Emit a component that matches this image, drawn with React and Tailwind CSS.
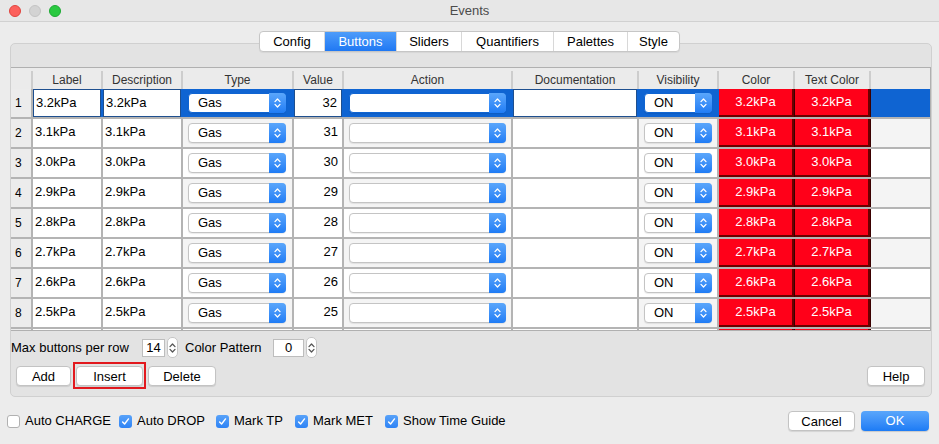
import React from "react";

const cols = [
  "w-[22px]",
  "w-[70px]",
  "w-[80px]",
  "w-[111px]",
  "w-[50px]",
  "w-[169px]",
  "w-[126px]",
  "w-[80px]",
  "w-[76px]",
  "w-[76px]",
  "flex-1",
];

const headers = ["", "Label", "Description", "Type", "Value", "Action", "Documentation", "Visibility", "Color", "Text Color", ""];

const rows = ["3.2", "3.1", "3.0", "2.9", "2.8", "2.7", "2.6", "2.5", "2.4"].map((v, i) => ({
  n: i + 1,
  label: v + "kPa",
  value: 32 - i,
}));

function Chevrons({ color = "white" }) {
  return (
    <svg width="7" height="12" viewBox="0 0 7 12" fill="none" stroke={color} strokeWidth="1.3" strokeLinecap="round" strokeLinejoin="round">
      <path d="M1 4.6 3.5 2 6 4.6" />
      <path d="M1 7.4 3.5 10 6 7.4" />
    </svg>
  );
}

function Popup({ text, width, selected }) {
  return (
    <div
      className={`ml-[5px] flex h-[20px] ${width} items-stretch rounded-[4px] border ${
        selected ? "border-[#0f64d2]" : "border-[#c4c4c4]"
      } bg-white shadow-[0_1px_1px_rgba(0,0,0,0.08)]`}
    >
      <span className="flex-1 pl-[9px] text-[13px] leading-[18px] text-black">{text}</span>
      <span className="-my-px -mr-px flex w-[17px] items-center justify-center rounded-r-[4px] bg-gradient-to-b from-[#5aa6fb] to-[#1f7cf5]">
        <Chevrons />
      </span>
    </div>
  );
}

function TextCell({ text, selected, right }) {
  return (
    <div
      className={`h-full w-full bg-white text-[13px] leading-[26px] text-black ${
        selected ? "border border-[#1e4f8f]" : ""
      } ${right ? "pr-[4px] text-right" : "pl-[2px]"}`}
    >
      {text}
    </div>
  );
}

function RedCell({ text }) {
  return (
    <div className="flex h-full w-full items-center justify-center border-r-2 border-b-2 border-[#6a0000] bg-[#ff0019] text-[13px] text-white">
      {text}
    </div>
  );
}

function Row({ r, hidden }) {
  const sel = r.n === 1;
  const rowBg = sel ? "bg-[#0f64d2]" : r.n % 2 === 0 ? "bg-[#f4f4f4]" : "bg-white";
  const line = sel ? "border-[#0f64d2]" : "border-[#b4b4b4]";
  const t = (s) => (hidden ? "" : s);
  return (
    <div className={`flex h-[30px] shrink-0 border-b-2 border-[#b4b4b4] ${rowBg}`}>
      <div className={`${cols[0]} border-r-2 border-[#b4b4b4] bg-[#ececec] pl-[4px] text-[12px] leading-[28px] text-black`}>{t(r.n)}</div>
      <div className={`${cols[1]} border-r-2 ${line}`}>
        <TextCell text={t(r.label)} selected={sel} />
      </div>
      <div className={`${cols[2]} border-r-2 ${line}`}>
        <TextCell text={t(r.label)} selected={sel} />
      </div>
      <div className={`${cols[3]} flex items-center border-r-2 ${line}`}>
        {!hidden && <Popup text="Gas" width="w-[98px]" selected={sel} />}
      </div>
      <div className={`${cols[4]} border-r-2 ${line}`}>
        <TextCell text={t(r.value)} selected={sel} right />
      </div>
      <div className={`${cols[5]} flex items-center border-r-2 ${line}`}>
        {!hidden && <Popup text="" width="w-[157px]" selected={sel} />}
      </div>
      <div className={`${cols[6]} border-r-2 ${line}`}>
        <TextCell text="" selected={sel} />
      </div>
      <div className={`${cols[7]} flex items-center border-r-2 ${line}`}>
        {!hidden && <Popup text="ON" width="w-[68px]" selected={sel} />}
      </div>
      <div className={`${cols[8]} border-r border-[#3a0000]`}>
        <RedCell text={t(r.label)} />
      </div>
      <div className={`${cols[9]} border-r border-[#3a0000]`}>
        <RedCell text={t(r.label)} />
      </div>
      <div className={cols[10]} />
    </div>
  );
}

function Check({ checked }) {
  return checked ? (
    <span className="flex h-[13px] w-[13px] shrink-0 items-center justify-center rounded-[3px] bg-gradient-to-b from-[#58a2f9] to-[#2d83f5]">
      <svg width="9" height="9" viewBox="0 0 9 9">
        <path d="M1.6 4.9 3.6 7 7.5 1.9" fill="none" stroke="white" strokeWidth="1.4" strokeLinecap="round" strokeLinejoin="round" />
      </svg>
    </span>
  ) : (
    <span className="h-[13px] w-[13px] shrink-0 rounded-[3px] border border-[#b1b1b1] bg-white" />
  );
}

function SmallStepper() {
  return (
    <span className="flex h-[21px] w-[11px] items-center justify-center rounded-[5px] border border-[#c6c6c6] bg-white">
      <Chevrons color="#555" />
    </span>
  );
}

function Btn({ children, width }) {
  return (
    <button className={`h-[20px] ${width} rounded-[4px] border border-[#c3c3c3] bg-white text-[13px] text-black shadow-[0_1px_1px_rgba(0,0,0,0.1)]`}>
      {children}
    </button>
  );
}

const tabs = [
  ["Config", "w-[64px]"],
  ["Buttons", "w-[72px]"],
  ["Sliders", "w-[65px]"],
  ["Quantifiers", "w-[92px]"],
  ["Palettes", "w-[74px]"],
  ["Style", "w-[52px]"],
];

export default function App() {
  return (
    <div className="flex h-[444px] w-[939px] flex-col overflow-hidden bg-[#ececec] font-['Liberation_Sans',Arial,sans-serif] text-black">
      {/* title bar */}
      <div className="grid h-[22px] shrink-0 grid-cols-[1fr_auto_1fr] items-center border-b border-[#d1d1d1] bg-[#e7e7e7]">
        <div className="flex items-center gap-[8px] pl-[9px]">
          <span className="h-[12px] w-[12px] rounded-full border border-[#e0443e] bg-[#fc605c]" />
          <span className="h-[12px] w-[12px] rounded-full border border-[#c4c4c4] bg-[#d3d3d3]" />
          <span className="h-[12px] w-[12px] rounded-full border border-[#1daa33] bg-[#2ac940]" />
        </div>
        <div className="text-[13px] text-[#4c4c4c]">Events</div>
        <div />
      </div>

      {/* tabs */}
      <div className="relative z-10 mt-[9px] -mb-[9px] flex justify-center">
        <div className="flex h-[21px] overflow-hidden rounded-[4px] border border-[#c6c6c6] bg-white shadow-[0_1px_1px_rgba(0,0,0,0.06)]">
          {tabs.map(([t, w], i) => (
            <div
              key={t}
              className={`${w} flex items-center justify-center text-[13px] ${i > 0 ? "border-l border-[#d8d8d8]" : ""} ${
                t === "Buttons" ? "bg-gradient-to-b from-[#4d9cfa] to-[#1f78f3] text-white" : "text-black"
              }`}
            >
              {t}
            </div>
          ))}
        </div>
      </div>

      {/* panel */}
      <div className="ml-[10px] w-[922px] shrink-0 rounded-[5px] border border-[#d0d0d0] bg-[#e3e3e3] pt-[23px] pb-[7px]">
        <div className="flex h-[264px] flex-col overflow-hidden border-t border-r border-b border-[#b0b0b0] bg-white">
          <div className="flex h-[21px] shrink-0 items-end bg-[#ebebeb]">
            {headers.map((h, i) => (
              <div
                key={i}
                className={`${cols[i]} flex h-[18px] items-center justify-center text-[12px] text-[#333] ${
                  i < 10 ? "border-r-2 border-[#cdcdcd]" : ""
                }`}
              >
                {h}
              </div>
            ))}
          </div>
          {rows.map((r) => (
            <Row key={r.n} r={r} hidden={r.n === 9} />
          ))}
        </div>

        <div className="mt-[6px] flex h-[21px] items-center text-[13px]">
          <span className="w-[123px]">Max buttons per row</span>
          <span className="ml-[8px] flex h-[18px] w-[23px] items-center justify-center border border-[#bdbdbd] bg-white">14</span>
          <span className="ml-[2px]">
            <SmallStepper />
          </span>
          <span className="ml-[7px] w-[80px]">Color Pattern</span>
          <span className="ml-[8px] flex h-[18px] w-[31px] items-center justify-center border border-[#bdbdbd] bg-white">0</span>
          <span className="ml-[2px]">
            <SmallStepper />
          </span>
        </div>

        <div className="mt-[4px] flex items-center justify-between pl-[5px] pr-[6px]">
          <div className="flex items-center gap-[2px]">
            <Btn width="w-[55px]">Add</Btn>
            <div className="flex h-[27px] items-center border-2 border-[#e2191e] px-[1px]">
              <Btn width="w-[67px]">Insert</Btn>
            </div>
            <Btn width="w-[68px]">Delete</Btn>
          </div>
          <Btn width="w-[58px]">Help</Btn>
        </div>
      </div>

      {/* bottom row */}
      <div className="mt-[14px] flex h-[20px] items-center justify-between pl-[7px] pr-[10px] text-[13px]">
        <div className="flex items-center">
          <label className="flex w-[112px] items-center gap-[5px]">
            <Check checked={false} />
            Auto CHARGE
          </label>
          <label className="flex w-[97px] items-center gap-[5px]">
            <Check checked />
            Auto DROP
          </label>
          <label className="flex w-[79px] items-center gap-[5px]">
            <Check checked />
            Mark TP
          </label>
          <label className="flex w-[90px] items-center gap-[5px]">
            <Check checked />
            Mark MET
          </label>
          <label className="flex items-center gap-[5px]">
            <Check checked />
            Show Time Guide
          </label>
        </div>
        <div className="flex items-center gap-[6px]">
          <Btn width="w-[67px]">Cancel</Btn>
          <button className="h-[20px] w-[68px] rounded-[4px] bg-gradient-to-b from-[#5aa6fb] to-[#1b7bf5] text-[13px] text-white shadow-[0_1px_1px_rgba(0,0,0,0.15)]">
            OK
          </button>
        </div>
      </div>
    </div>
  );
}
